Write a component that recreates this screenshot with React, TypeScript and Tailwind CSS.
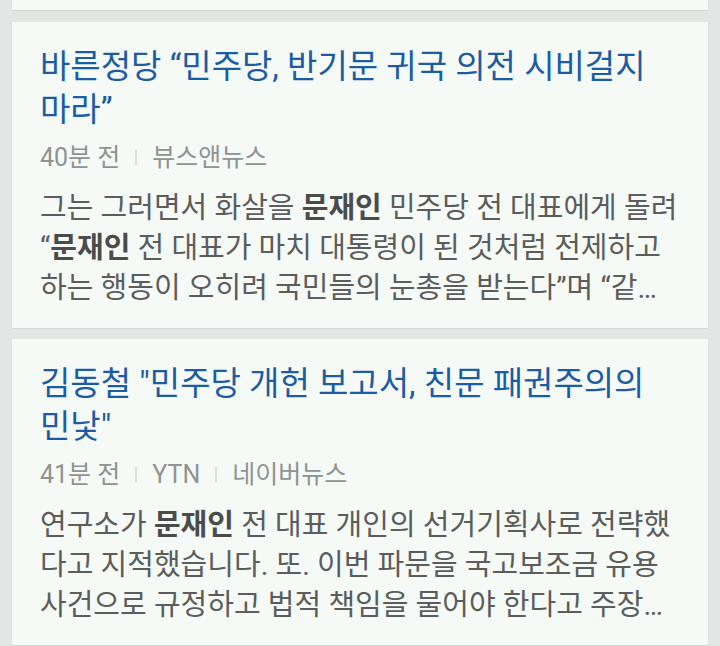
import React from "react";

const font = { fontFamily: 'Roboto, "Noto Sans CJK KR", sans-serif' };

function Sep() {
  return <span className="inline-block w-[2px] h-[15px] bg-[#dadedd] mx-[15px] align-middle relative top-[-2px]" />;
}

function Card({
  title,
  meta,
  body,
}: {
  title: React.ReactNode;
  meta: string[];
  body: React.ReactNode;
}) {
  return (
    <div className="mx-[12px] bg-[#f6faf7] shadow-[0_1px_1px_rgba(0,0,0,0.07)] pt-[23px] pb-[20px] pl-[28px] pr-[10px]">
      <div className="text-[33px] leading-[43px] text-[#1b5ca4] whitespace-nowrap">{title}</div>
      <div className="mt-[12px] text-[25px] leading-[30px] text-[#8f9391] whitespace-nowrap">
        {meta.map((m, i) => (
          <React.Fragment key={i}>
            {i > 0 && <Sep />}
            <span>{m}</span>
          </React.Fragment>
        ))}
      </div>
      <div className="mt-[15px] text-[29px] leading-[40px] text-[#5a5d5b] whitespace-nowrap">{body}</div>
    </div>
  );
}

export default function App() {
  return (
    <div className="w-[720px] h-[646px] overflow-hidden bg-[#e2e7e6]" style={font}>
      <div className="mx-[12px] h-[10px] bg-[#f6faf7] shadow-[0_1px_1px_rgba(0,0,0,0.07)]" />
      <div className="mt-[12px] flex flex-col gap-[11px]">
        <Card
          title={
            <>
              바른정당 “민주당, 반기문 귀국 의전 시비걸지
              <br />
              마라”
            </>
          }
          meta={["40분 전", "뷰스앤뉴스"]}
          body={
            <>
              그는 그러면서 화살을 <b className="font-bold text-[#4a4c4b]">문재인</b> 민주당 전 대표에게 돌려
              <br />“<b className="font-bold text-[#4a4c4b]">문재인</b> 전 대표가 마치 대통령이 된 것처럼 전제하고
              <br />
              하는 행동이 오히려 국민들의 눈총을 받는다”며 “같…
            </>
          }
        />
        <Card
          title={
            <>
              김동철 "민주당 개헌 보고서, 친문 패권주의의
              <br />
              민낯"
            </>
          }
          meta={["41분 전", "YTN", "네이버뉴스"]}
          body={
            <>
              연구소가 <b className="font-bold text-[#4a4c4b]">문재인</b> 전 대표 개인의 선거기획사로 전략했
              <br />
              다고 지적했습니다. 또. 이번 파문을 국고보조금 유용
              <br />
              사건으로 규정하고 법적 책임을 물어야 한다고 주장…
            </>
          }
        />
      </div>
    </div>
  );
}
